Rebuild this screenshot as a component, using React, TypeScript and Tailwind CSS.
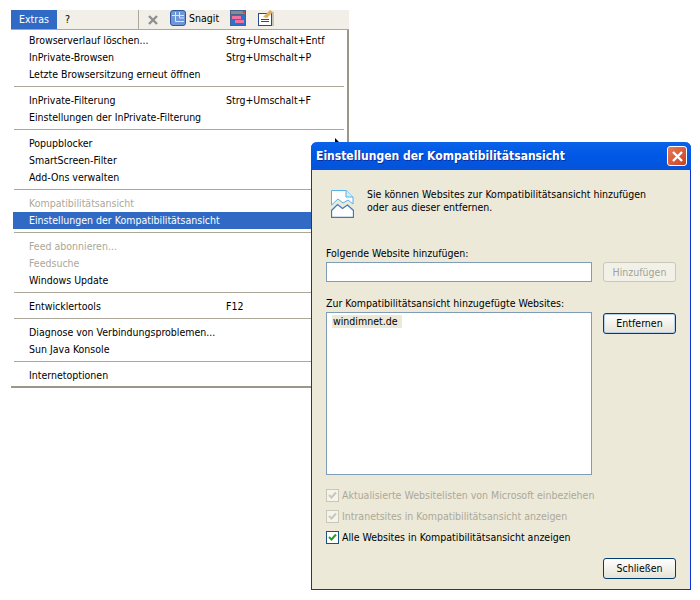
import React from "react";

type MenuItem = { label: string; shortcut?: string; disabled?: boolean; active?: boolean };

const menuGroups: MenuItem[][] = [
  [
    { label: "Browserverlauf löschen...", shortcut: "Strg+Umschalt+Entf" },
    { label: "InPrivate-Browsen", shortcut: "Strg+Umschalt+P" },
    { label: "Letzte Browsersitzung erneut öffnen" },
  ],
  [
    { label: "InPrivate-Filterung", shortcut: "Strg+Umschalt+F" },
    { label: "Einstellungen der InPrivate-Filterung" },
  ],
  [{ label: "Popupblocker" }, { label: "SmartScreen-Filter" }, { label: "Add-Ons verwalten" }],
  [
    { label: "Kompatibilitätsansicht", disabled: true },
    { label: "Einstellungen der Kompatibilitätsansicht", active: true },
  ],
  [
    { label: "Feed abonnieren...", disabled: true },
    { label: "Feedsuche", disabled: true },
    { label: "Windows Update" },
  ],
  [{ label: "Entwicklertools", shortcut: "F12" }],
  [{ label: "Diagnose von Verbindungsproblemen..." }, { label: "Sun Java Konsole" }],
  [{ label: "Internetoptionen" }],
];

const Row = ({ item }: { item: MenuItem }) => (
  <div
    className={`flex h-[17px] items-center pl-[16px] ${
      item.active ? "bg-[#316ac5] text-white" : item.disabled ? "text-[#aca899]" : "text-black"
    }`}
  >
    <span className="w-[197px] shrink-0 whitespace-nowrap">{item.label}</span>
    {item.shortcut && <span className="whitespace-nowrap">{item.shortcut}</span>}
  </div>
);

const Check = ({ enabled }: { enabled: boolean }) => (
  <span
    className={`flex h-[13px] w-[13px] shrink-0 items-center justify-center border ${
      enabled ? "border-[#1c5180] bg-white" : "border-[#c9c7ba] bg-[#f5f4ea]"
    }`}
  >
    <svg width="9" height="9" viewBox="0 0 9 9">
      <path
        d="M1 4l2.5 2.5L8 1.5"
        fill="none"
        stroke={enabled ? "#21a121" : "#c9c7ba"}
        strokeWidth="2"
      />
    </svg>
  </span>
);

const XpButton = ({ label, disabled, focused }: { label: string; disabled?: boolean; focused?: boolean }) => (
  <div
    className={`flex w-[73px] items-center justify-center rounded-[3px] border ${
      disabled
        ? "h-[20px] border-[#c9c7ba] bg-[#f2f1e8] text-[#a4a296]"
        : "h-[21px] border-[#003c74] bg-gradient-to-b from-white to-[#e6e3d6] text-black"
    } ${focused ? "shadow-[inset_0_0_0_1px_#b8d0ee]" : ""}`}
  >
    {label}
  </div>
);

export default function App() {
  return (
    <div className="relative h-[600px] w-[700px] overflow-hidden bg-white font-['DejaVu_Sans_Condensed','DejaVu_Sans',sans-serif] text-[10.5px] leading-[17px]">
      <div className="pt-[10px] pl-[11px]">
        {/* Menu bar */}
        <div className="flex h-[20px] w-[338px] items-center border-b border-[#aca899] bg-[#f1efe7]">
          <div className="flex h-[19px] w-[46px] items-center justify-center bg-[#316ac5] text-white">Extras</div>
          <div className="w-[20px] pl-[8px] text-black">?</div>
          <div className="ml-[61px] h-[19px] w-px bg-[#aca899]" />
          <svg className="ml-[9px]" width="10" height="10" viewBox="0 0 10 10">
            <path d="M1 1l8 8M9 1l-8 8" stroke="#8f8f8f" strokeWidth="2.4" />
          </svg>
          <svg className="ml-[12px] -mt-[3px]" width="16" height="16" viewBox="0 0 16 16">
            <rect x="0.5" y="0.5" width="15" height="15" rx="2.5" fill="#6f97d8" stroke="#33559c" />
            <path d="M5.5 2v9.5H14M9.5 2v6H14M2 5.5h12" fill="none" stroke="#dbe6f7" />
          </svg>
          <span className="ml-[3px] w-[30px] -mt-[3px] text-black">Snagit</span>
          <svg className="ml-[11px] -mt-[3px]" width="16" height="16" viewBox="0 0 16 16">
            <rect width="16" height="16" fill="#44638f" />
            <rect x="1" y="1" width="14" height="3" fill="#8a8a8a" />
            <rect x="13" y="1" width="2" height="2" fill="#d04040" />
            <rect x="1" y="5" width="14" height="10" fill="#2f6fd0" />
            <rect x="2" y="6" width="9" height="3" fill="#f070a0" />
            <rect x="5" y="10" width="9" height="3" fill="#f070a0" />
          </svg>
          <svg className="ml-[12px] -mt-[3px]" width="16" height="16" viewBox="0 0 16 16">
            <rect x="14" y="2" width="2" height="14" fill="#c8c6b8" />
            <rect x="0.5" y="3.5" width="13" height="12" fill="#fff" stroke="#2b4a8c" />
            <rect x="3" y="9" width="8" height="1" fill="#2b4a8c" />
            <rect x="3" y="11" width="8" height="1" fill="#2b4a8c" />
            <path d="M5 7l7-7 3 2-6 6z" fill="#e0b060" />
          </svg>
        </div>

        {/* Extras menu */}
        <div className="w-[338px] border-r-2 border-b-2 border-[#9c9888] bg-white pt-[2px] pb-[2px] pl-[2px]">
          {menuGroups.map((group, i) => (
            <div key={i}>
              {i > 0 && (
                <div className="h-[9px] pt-[3px] pl-px pr-[3px]">
                  <div className="h-px w-full bg-[#aca899]" />
                </div>
              )}
              {group.map((item) => (
                <Row key={item.label} item={item} />
              ))}
            </div>
          ))}
        </div>
      </div>

      {/* Mouse pointer tip, peeking out above the dialog */}
      <svg className="absolute top-[138px] left-[335px]" width="6" height="5" viewBox="0 0 6 5">
        <path d="M0 0l5 5H0z" fill="#000" />
      </svg>

      {/* Dialog window */}
      <div className="absolute top-[142px] left-[311px] flex h-[448px] w-[380px] flex-col rounded-t-[6px] border-x border-b border-[#0831d9] bg-[#ece9d8]">
        <div className="-mx-px flex h-[28px] items-center justify-between rounded-t-[6px] bg-gradient-to-b from-[#0a62e8] via-[#0058e6] to-[#0553d8] pr-[4px] pl-[5px]">
          <span className="text-[12px] font-bold text-white [text-shadow:1px_1px_#0f2f9c]">
            Einstellungen der Kompatibilitätsansicht
          </span>
          <div className="flex h-[20px] w-[20px] items-center justify-center rounded-[3px] border border-white bg-gradient-to-br from-[#e8795a] to-[#c8401f]">
            <svg width="13" height="13" viewBox="0 0 13 13">
              <path d="M2 2l9 9M11 2l-9 9" stroke="#fff" strokeWidth="2.4" />
            </svg>
          </div>
        </div>
        <div className="flex flex-1 flex-col pt-[19px] pr-[14px] pl-[14px]">
          <div className="flex">
            <svg className="ml-[5px] mt-[1px]" width="23" height="28" viewBox="0 0 23 28">
              <path d="M.5.5H15L22 7v7l-5-4-5 3-5-4-6.500 6z" fill="#fff" stroke="#55b2ea" />
              <path d="M15 .5V7h7" fill="#d5ecfa" stroke="#55b2ea" />
              <path d="M.5 20.500l6-6 5 4 5-3.500 6 5.500v7H.5z" fill="#fff" stroke="#3f78c0" strokeWidth="1.300" />
            </svg>
            <p className="ml-[13px] -mt-px leading-[13px] text-black">
              Sie können Websites zur Kompatibilitätsansicht hinzufügen
              <br />
              oder aus dieser entfernen.
            </p>
          </div>

          <div className="mt-[27px] text-black">Folgende Website hinzufügen:</div>
          <div className="flex items-start justify-between">
            <div className="h-[20px] w-[266px] border border-[#7f9db9] bg-white" />
            <XpButton label="Hinzufügen" disabled />
          </div>

          <div className="mt-[13px] text-black">Zur Kompatibilitätsansicht hinzugefügte Websites:</div>
          <div className="flex items-start justify-between">
            <div className="h-[163px] w-[266px] border border-[#7f9db9] bg-white pt-[2px] pl-[5px]">
              <span className="block h-[13px] w-[70px] bg-[#ece9d8] pl-px leading-[13px] text-black">windimnet.de</span>
            </div>
            <div className="mt-px">
              <XpButton label="Entfernen" focused />
            </div>
          </div>

          <div className="mt-[14px] flex flex-col gap-[8px]">
            <label className="flex h-[13px] items-center gap-[3px] text-[#aca899]">
              <Check enabled={false} />
              Aktualisierte Websitelisten von Microsoft einbeziehen
            </label>
            <label className="flex h-[13px] items-center gap-[3px] text-[#aca899]">
              <Check enabled={false} />
              Intranetsites in Kompatibilitätsansicht anzeigen
            </label>
            <label className="flex h-[13px] items-center gap-[3px] text-black">
              <Check enabled />
              Alle Websites in Kompatibilitätsansicht anzeigen
            </label>
          </div>

          <div className="mt-[14px] flex justify-end">
            <XpButton label="Schließen" />
          </div>
        </div>
      </div>
    </div>
  );
}
